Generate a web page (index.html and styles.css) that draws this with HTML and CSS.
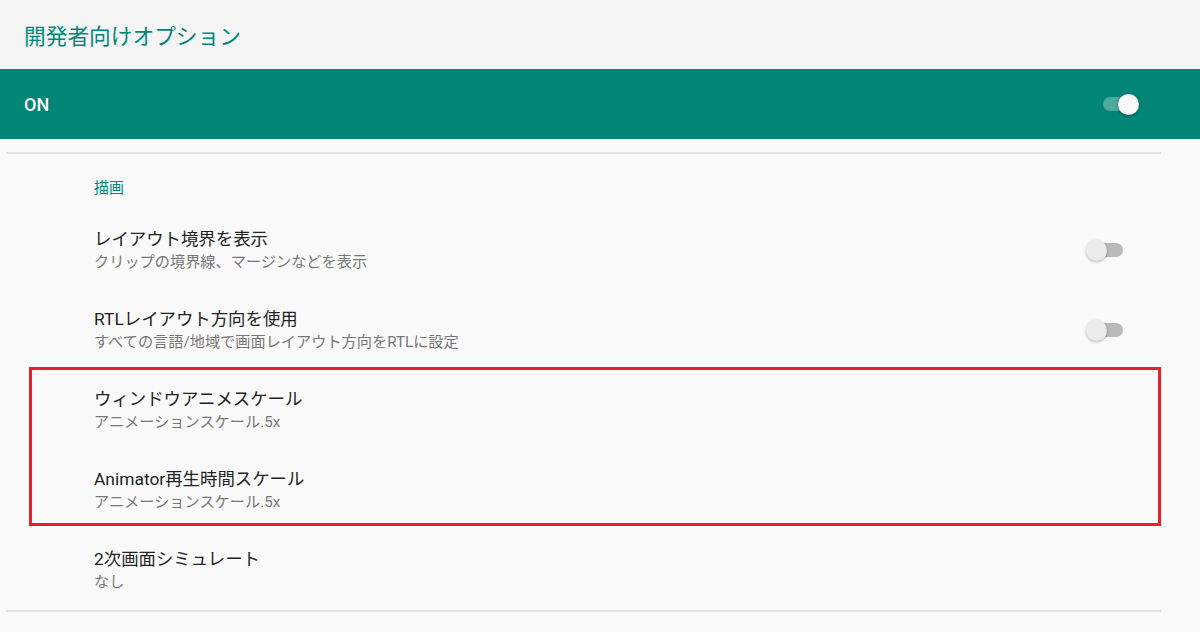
FILE: index.html
```html
<!DOCTYPE html>
<html lang="ja">
<head>
<meta charset="utf-8">
<title>開発者向けオプション</title>
<link rel="stylesheet" href="styles.css">
</head>
<body>
<header class="appbar">開発者向けオプション</header>
<div class="switchbar">
  <span class="switchbar-label">ON</span>
  <span class="switch switch-on"><span class="track"></span><span class="thumb"></span></span>
</div>
<main class="list">
  <div class="category">描画</div>
  <div class="item">
    <div class="texts">
      <div class="title">レイアウト境界を表示</div>
      <div class="summary">クリップの境界線、マージンなどを表示</div>
    </div>
    <span class="switch switch-off"><span class="track"></span><span class="thumb"></span></span>
  </div>
  <div class="item">
    <div class="texts">
      <div class="title">RTLレイアウト方向を使用</div>
      <div class="summary">すべての言語/地域で画面レイアウト方向をRTLに設定</div>
    </div>
    <span class="switch switch-off"><span class="track"></span><span class="thumb"></span></span>
  </div>
  <div class="highlight">
    <div class="item">
      <div class="texts">
        <div class="title">ウィンドウアニメスケール</div>
        <div class="summary">アニメーションスケール.5x</div>
      </div>
    </div>
    <div class="item">
      <div class="texts">
        <div class="title">Animator再生時間スケール</div>
        <div class="summary">アニメーションスケール.5x</div>
      </div>
    </div>
  </div>
  <div class="item">
    <div class="texts">
      <div class="title">2次画面シミュレート</div>
      <div class="summary">なし</div>
    </div>
  </div>
</main>
</body>
</html>
```
FILE: styles.css
```css
html, body {
  margin: 0;
  padding: 0;
}
body {
  background: #fafafa;
  font-family: Roboto, "Noto Sans CJK JP", sans-serif;
  width: 1200px;
  height: 632px;
  overflow: hidden;
}
.appbar {
  height: 69px;
  background: #f5f5f5;
  color: #00877a;
  font-size: 21.7px;
  display: flex;
  align-items: center;
  padding-left: 24px;
  box-sizing: border-box;
}
.switchbar {
  height: 70px;
  background: #008577;
  display: flex;
  align-items: center;
  justify-content: space-between;
  padding: 0 61px 0 24px;
}
.switchbar-label {
  color: #ffffff;
  font-size: 18px;
  font-weight: 500;
}
.switch {
  position: relative;
  display: inline-block;
  height: 21px;
  flex: none;
}
.switch .track {
  position: absolute;
  top: 3.5px;
  height: 14px;
  border-radius: 7px;
}
.switch .thumb {
  position: absolute;
  top: 0;
  width: 21px;
  height: 21px;
  border-radius: 50%;
}
.switch-on {
  width: 36px;
}
.switch-on .track {
  left: 0;
  width: 34px;
  background: rgba(255, 255, 255, 0.3);
}
.switch-on .thumb {
  right: 0;
  background: #fafafa;
  box-shadow: 0 1px 3px rgba(0, 0, 0, 0.35);
}
.switch-off {
  width: 37px;
  margin-right: 38px;
}
.switch-off .track {
  right: 0;
  width: 34px;
  background: #bababa;
}
.switch-off .thumb {
  left: 0;
  background: #ececec;
  box-shadow: 0 1px 3px rgba(0, 0, 0, 0.3);
}
.list {
  margin: 13px 39px 0 6px;
  border-top: 2px solid #e2e2e2;
  border-bottom: 2px solid #e2e2e2;
}
.category {
  color: #00877a;
  font-size: 15px;
  line-height: 20px;
  padding: 24px 0 12px 88px;
}
.item {
  height: 80px;
  box-sizing: border-box;
  padding: 18px 0 18px 88px;
  display: flex;
  align-items: center;
  justify-content: space-between;
}
.texts {
  display: flex;
  flex-direction: column;
}
.title {
  font-size: 17.4px;
  line-height: 22px;
  color: #222222;
}
.summary {
  font-size: 15.2px;
  line-height: 20px;
  margin-top: 2px;
  color: #777777;
}
.highlight {
  position: relative;
}
.highlight::after {
  content: "";
  position: absolute;
  top: -3px;
  bottom: 4px;
  left: 23px;
  right: 0;
  border: 3px solid #e8202a;
  pointer-events: none;
}
```
